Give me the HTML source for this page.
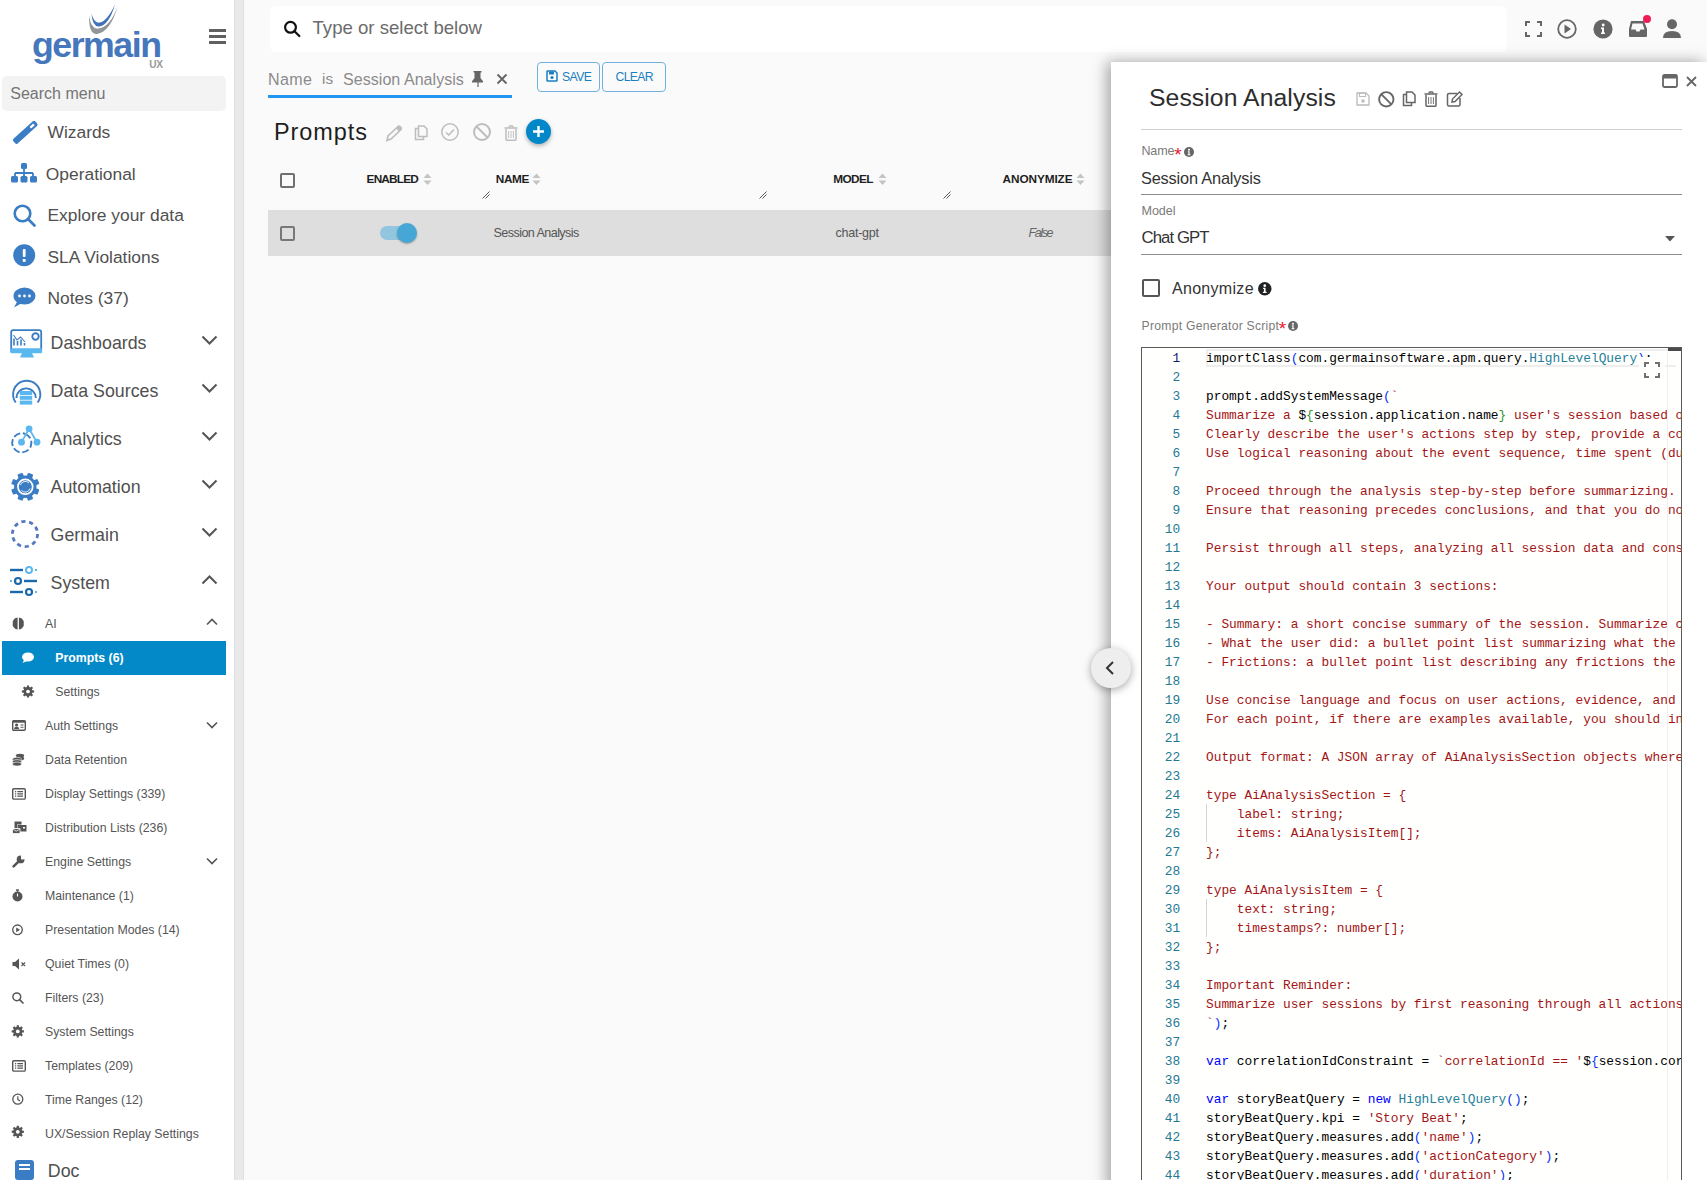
<!DOCTYPE html><html><head><meta charset="utf-8"><style>
html,body{margin:0;padding:0}
body{width:1707px;height:1180px;overflow:hidden;position:relative;background:#fafafa;font-family:"Liberation Sans",sans-serif}
svg{overflow:visible}
</style></head><body>
<div style="position:absolute;left:0px;top:0px;width:234px;height:1180px;background:#fff"></div>
<div style="position:absolute;left:234px;top:0px;width:10px;height:1180px;background:linear-gradient(90deg,#d9d9d9 0px,#e9e9e9 1.5px,#e9e9e9 8.5px,#d9d9d9 10px)"></div>
<svg style="position:absolute;left:0px;top:0px;" width="130" height="40" viewBox="0 0 130 40"><path d="M89.2 16 Q88.5 34.5 97 33.9 Q110 32.5 118 5.8 Q110 27.5 98 28.6 Q91 29.2 89.2 16 Z" fill="#939598"/><path d="M91.4 13.6 Q92.5 27 99 26.4 Q109 25.2 115 4.4 Q107 21.5 99 22.6 Q94 23.2 91.4 13.6 Z" fill="#4472b8"/></svg>
<div style="position:absolute;left:32.00px;top:27.98px;font-size:35.7px;line-height:35.7px;color:#4676bb;font-weight:bold;font-family:'Liberation Sans', sans-serif;white-space:pre;letter-spacing:-1.479px;">germain</div>
<div style="position:absolute;left:149.30px;top:60.37px;font-size:10.2px;line-height:10.2px;color:#9a9a9a;font-weight:bold;font-family:'Liberation Sans', sans-serif;white-space:pre;letter-spacing:-0.378px;">UX</div>
<div style="position:absolute;left:209px;top:29px;width:17px;height:2.5px;background:#606060"></div>
<div style="position:absolute;left:209px;top:35px;width:17px;height:2.5px;background:#606060"></div>
<div style="position:absolute;left:209px;top:41px;width:17px;height:2.5px;background:#606060"></div>
<div style="position:absolute;left:2px;top:76px;width:224px;height:35px;background:#f3f3f3;border-radius:5px"></div>
<div style="position:absolute;left:10.30px;top:86.46px;font-size:16px;line-height:16px;color:#757575;font-weight:normal;font-family:'Liberation Sans', sans-serif;white-space:pre;">Search menu</div>
<div style="position:absolute;left:47.50px;top:124.07px;font-size:17.4px;line-height:17.4px;color:#505050;font-weight:normal;font-family:'Liberation Sans', sans-serif;white-space:pre;">Wizards</div>
<div style="position:absolute;left:45.80px;top:166.07px;font-size:17.4px;line-height:17.4px;color:#505050;font-weight:normal;font-family:'Liberation Sans', sans-serif;white-space:pre;">Operational</div>
<div style="position:absolute;left:47.50px;top:207.07px;font-size:17.4px;line-height:17.4px;color:#505050;font-weight:normal;font-family:'Liberation Sans', sans-serif;white-space:pre;">Explore your data</div>
<div style="position:absolute;left:47.50px;top:249.07px;font-size:17.4px;line-height:17.4px;color:#505050;font-weight:normal;font-family:'Liberation Sans', sans-serif;white-space:pre;">SLA Violations</div>
<div style="position:absolute;left:47.50px;top:290.07px;font-size:17.4px;line-height:17.4px;color:#505050;font-weight:normal;font-family:'Liberation Sans', sans-serif;white-space:pre;">Notes (37)</div>
<svg style="position:absolute;left:0px;top:0px;" width="1" height="1" viewBox="0 0 1 1"><g transform="translate(0.6 1.3) rotate(-42 24.6 131)"><rect x="9.8" y="128" width="29.6" height="6.2" rx="1.8" fill="#3b7dc4"/><rect x="31.5" y="129.9" width="5" height="2.2" rx="0.5" fill="#fff"/></g></svg>
<svg style="position:absolute;left:11px;top:163px;" width="26" height="20" viewBox="0 0 26 20"><rect x="10" y="0" width="6" height="6" rx="1.5" fill="#3b7dc4"/><path d="M13 6 V10 M4 10 H22 M4 10 V13 M13 10 V13 M22 10 V13" stroke="#3b7dc4" stroke-width="1.8" fill="none"/><rect x="0" y="13" width="7" height="6.5" rx="1.5" fill="#3b7dc4"/><rect x="9.5" y="13" width="7" height="6.5" rx="1.5" fill="#3b7dc4"/><rect x="19" y="13" width="7" height="6.5" rx="1.5" fill="#3b7dc4"/></svg>
<svg style="position:absolute;left:13px;top:204px;" width="23" height="23" viewBox="0 0 23 23"><circle cx="9.5" cy="9.5" r="7.8" stroke="#3b7dc4" stroke-width="2.6" fill="none"/><path d="M15 15 L21.5 21.5" stroke="#3b7dc4" stroke-width="2.8" stroke-linecap="round"/></svg>
<svg style="position:absolute;left:13px;top:244px;" width="23" height="23" viewBox="0 0 23 23"><circle cx="11.2" cy="11.2" r="11" fill="#3b7dc4"/><rect x="9.8" y="5" width="2.8" height="8" rx="1" fill="#fff"/><rect x="9.8" y="15" width="2.8" height="2.8" fill="#fff"/></svg>
<svg style="position:absolute;left:13px;top:287px;" width="23" height="21" viewBox="0 0 23 21"><ellipse cx="11.5" cy="9" rx="11" ry="8.6" fill="#3b7dc4"/><path d="M1 20.5 L5 13 L9 16 Z" fill="#3b7dc4"/><circle cx="6.5" cy="9" r="1.4" fill="#fff"/><circle cx="11.5" cy="9" r="1.4" fill="#fff"/><circle cx="16.5" cy="9" r="1.4" fill="#fff"/></svg>
<div style="position:absolute;left:50.60px;top:334.73px;font-size:17.8px;line-height:17.8px;color:#505050;font-weight:normal;font-family:'Liberation Sans', sans-serif;white-space:pre;">Dashboards</div>
<svg style="position:absolute;left:201px;top:335px;" width="17" height="10" viewBox="0 0 17 10"><path d="M1.5 1.5 L8.5 8.5 L15.5 1.5" stroke="#555" stroke-width="2" fill="none"/></svg>
<div style="position:absolute;left:50.60px;top:382.73px;font-size:17.8px;line-height:17.8px;color:#505050;font-weight:normal;font-family:'Liberation Sans', sans-serif;white-space:pre;">Data Sources</div>
<svg style="position:absolute;left:201px;top:383px;" width="17" height="10" viewBox="0 0 17 10"><path d="M1.5 1.5 L8.5 8.5 L15.5 1.5" stroke="#555" stroke-width="2" fill="none"/></svg>
<div style="position:absolute;left:50.60px;top:430.73px;font-size:17.8px;line-height:17.8px;color:#505050;font-weight:normal;font-family:'Liberation Sans', sans-serif;white-space:pre;">Analytics</div>
<svg style="position:absolute;left:201px;top:431px;" width="17" height="10" viewBox="0 0 17 10"><path d="M1.5 1.5 L8.5 8.5 L15.5 1.5" stroke="#555" stroke-width="2" fill="none"/></svg>
<div style="position:absolute;left:50.60px;top:478.73px;font-size:17.8px;line-height:17.8px;color:#505050;font-weight:normal;font-family:'Liberation Sans', sans-serif;white-space:pre;">Automation</div>
<svg style="position:absolute;left:201px;top:479px;" width="17" height="10" viewBox="0 0 17 10"><path d="M1.5 1.5 L8.5 8.5 L15.5 1.5" stroke="#555" stroke-width="2" fill="none"/></svg>
<div style="position:absolute;left:50.60px;top:526.73px;font-size:17.8px;line-height:17.8px;color:#505050;font-weight:normal;font-family:'Liberation Sans', sans-serif;white-space:pre;">Germain</div>
<svg style="position:absolute;left:201px;top:527px;" width="17" height="10" viewBox="0 0 17 10"><path d="M1.5 1.5 L8.5 8.5 L15.5 1.5" stroke="#555" stroke-width="2" fill="none"/></svg>
<div style="position:absolute;left:50.60px;top:574.73px;font-size:17.8px;line-height:17.8px;color:#505050;font-weight:normal;font-family:'Liberation Sans', sans-serif;white-space:pre;">System</div>
<svg style="position:absolute;left:201px;top:575px;" width="17" height="10" viewBox="0 0 17 10"><path d="M1.5 8.5 L8.5 1.5 L15.5 8.5" stroke="#555" stroke-width="2" fill="none"/></svg>
<svg style="position:absolute;left:0px;top:0px;" width="1" height="1" viewBox="0 0 1 1"><rect x="11.2" y="330.2" width="30" height="22" rx="2" fill="none" stroke="#3b7dc4" stroke-width="1.8"/><rect x="10.3" y="348.3" width="31.8" height="5" rx="1.5" fill="#5bb8ef"/><path d="M22 353 L20 357.5 H34 L32 353 Z" fill="#5bb8ef"/><path d="M13.5 335 L17 340 L20.5 337 L25 342" stroke="#3b7dc4" stroke-width="1.1" fill="none"/><path d="M14 345.5 V338.5 M17.5 345.5 V341 M21 345.5 V339.5 M24.5 345.5 V343" stroke="#3b7dc4" stroke-width="1.6"/><circle cx="35.5" cy="336.5" r="3.2" fill="none" stroke="#3b7dc4" stroke-width="1.9"/></svg>
<svg style="position:absolute;left:0px;top:0px;" width="1" height="1" viewBox="0 0 1 1"><path d="M15.8 402.5 A13.6 13.6 0 1 1 37.6 402.5" stroke="#3b7dc4" stroke-width="1.9" fill="none"/><path d="M16.5 398 A9.3 9.3 0 1 1 35.8 398" stroke="#3b7dc4" stroke-width="1.9" fill="none"/><rect x="19.8" y="391" width="12.4" height="4" fill="#5bb8ef"/><rect x="19.8" y="395.8" width="12.4" height="4" fill="#5bb8ef"/><rect x="19.8" y="400.6" width="12.4" height="4" fill="#5bb8ef"/></svg>
<svg style="position:absolute;left:0px;top:0px;" width="1" height="1" viewBox="0 0 1 1"><circle cx="21.8" cy="442.8" r="9.6" stroke="#3b7dc4" stroke-width="1.9" fill="none" stroke-dasharray="7 2.6" transform="rotate(-70 21.8 442.8)"/><path d="M21.5 442.2 L29.1 428.8 L37 442.2" stroke="#5bb8ef" stroke-width="1.7" fill="none"/><circle cx="29.1" cy="428.8" r="3.4" fill="#5bb8ef"/><circle cx="21.5" cy="442.2" r="3.4" fill="#5bb8ef"/><circle cx="37" cy="442.2" r="3.4" fill="#5bb8ef"/></svg>
<svg style="position:absolute;left:0px;top:0px;" width="1" height="1" viewBox="0 0 1 1"><rect x="22.5" y="472.6" width="5.6" height="6" rx="1" fill="#3b7dc4" transform="rotate(22.5 25.3 486.8)"/><rect x="22.5" y="472.6" width="5.6" height="6" rx="1" fill="#3b7dc4" transform="rotate(67.5 25.3 486.8)"/><rect x="22.5" y="472.6" width="5.6" height="6" rx="1" fill="#3b7dc4" transform="rotate(112.5 25.3 486.8)"/><rect x="22.5" y="472.6" width="5.6" height="6" rx="1" fill="#3b7dc4" transform="rotate(157.5 25.3 486.8)"/><rect x="22.5" y="472.6" width="5.6" height="6" rx="1" fill="#3b7dc4" transform="rotate(202.5 25.3 486.8)"/><rect x="22.5" y="472.6" width="5.6" height="6" rx="1" fill="#3b7dc4" transform="rotate(247.5 25.3 486.8)"/><rect x="22.5" y="472.6" width="5.6" height="6" rx="1" fill="#3b7dc4" transform="rotate(292.5 25.3 486.8)"/><rect x="22.5" y="472.6" width="5.6" height="6" rx="1" fill="#3b7dc4" transform="rotate(337.5 25.3 486.8)"/><circle cx="25.3" cy="486.8" r="11.2" fill="#3b7dc4"/><circle cx="25.3" cy="486.8" r="7.4" fill="none" stroke="#fff" stroke-width="1.7"/><path d="M20.5 485 A5 5 0 0 1 29 483" stroke="#fff" stroke-width="0.9" fill="none"/><path d="M30 488.5 A5 5 0 0 1 21.5 490.5" stroke="#fff" stroke-width="0.9" fill="none"/></svg>
<svg style="position:absolute;left:10px;top:519px;" width="30" height="30" viewBox="0 0 30 30"><circle cx="15" cy="15" r="12.6" stroke="#5579c0" stroke-width="2.8" fill="none" stroke-dasharray="4.2 3.7"/></svg>
<svg style="position:absolute;left:9px;top:566px;" width="30" height="30" viewBox="0 0 30 30"><path d="M1 4 H14" stroke="#1b68ad" stroke-width="2.4"/><circle cx="20" cy="4" r="3" fill="none" stroke="#5bb8ef" stroke-width="2"/><path d="M26 4 H28" stroke="#5bb8ef" stroke-width="2"/><path d="M1 15 H3" stroke="#5bb8ef" stroke-width="2"/><circle cx="9" cy="15" r="3" fill="none" stroke="#1b68ad" stroke-width="2.2"/><path d="M15 15 H28" stroke="#1b68ad" stroke-width="2.4"/><path d="M1 26 H14" stroke="#1b68ad" stroke-width="2.4"/><circle cx="20" cy="26" r="3" fill="none" stroke="#1b68ad" stroke-width="2.2"/><path d="M26 26 H28" stroke="#5bb8ef" stroke-width="2"/></svg>
<div style="position:absolute;left:45.00px;top:617.59px;font-size:12.3px;line-height:12.3px;color:#555;font-weight:normal;font-family:'Liberation Sans', sans-serif;white-space:pre;">AI</div>
<svg style="position:absolute;left:206px;top:618px;" width="12" height="8" viewBox="0 0 12 8"><path d="M1 6.5 L6 1.5 L11 6.5" stroke="#555" stroke-width="1.6" fill="none"/></svg>
<svg style="position:absolute;left:12px;top:617px;" width="13" height="13" viewBox="0 0 13 13"><path d="M5.6 0.6 Q2.5 0.8 1.5 3 Q0.2 4.5 0.8 6.5 Q0.2 8.5 1.5 10 Q3 12.6 5.6 12.4 Z M6.9 0.6 Q10 0.8 11 3 Q12.3 4.5 11.7 6.5 Q12.3 8.5 11 10 Q9.5 12.6 6.9 12.4 Z" fill="#555"/></svg>
<div style="position:absolute;left:2px;top:641px;width:224px;height:34px;background:#0389c8"></div>
<div style="position:absolute;left:55.30px;top:651.59px;font-size:12.3px;line-height:12.3px;color:#fff;font-weight:bold;font-family:'Liberation Sans', sans-serif;white-space:pre;">Prompts (6)</div>
<svg style="position:absolute;left:21.3px;top:652px;" width="13" height="12" viewBox="0 0 13 12"><ellipse cx="7" cy="5" rx="6" ry="4.6" fill="#fff"/><path d="M1.5 11 L3.5 7 L6 9 Z" fill="#fff"/></svg>
<div style="position:absolute;left:55.30px;top:685.59px;font-size:12.3px;line-height:12.3px;color:#555;font-weight:normal;font-family:'Liberation Sans', sans-serif;white-space:pre;">Settings</div>
<div style="position:absolute;left:45.00px;top:719.59px;font-size:12.3px;line-height:12.3px;color:#555;font-weight:normal;font-family:'Liberation Sans', sans-serif;white-space:pre;">Auth Settings</div>
<svg style="position:absolute;left:206px;top:721px;" width="12" height="8" viewBox="0 0 12 8"><path d="M1 1.5 L6 6.5 L11 1.5" stroke="#555" stroke-width="1.6" fill="none"/></svg>
<div style="position:absolute;left:45.00px;top:753.59px;font-size:12.3px;line-height:12.3px;color:#555;font-weight:normal;font-family:'Liberation Sans', sans-serif;white-space:pre;">Data Retention</div>
<div style="position:absolute;left:45.00px;top:787.59px;font-size:12.3px;line-height:12.3px;color:#555;font-weight:normal;font-family:'Liberation Sans', sans-serif;white-space:pre;">Display Settings (339)</div>
<div style="position:absolute;left:45.00px;top:821.59px;font-size:12.3px;line-height:12.3px;color:#555;font-weight:normal;font-family:'Liberation Sans', sans-serif;white-space:pre;">Distribution Lists (236)</div>
<div style="position:absolute;left:45.00px;top:855.59px;font-size:12.3px;line-height:12.3px;color:#555;font-weight:normal;font-family:'Liberation Sans', sans-serif;white-space:pre;">Engine Settings</div>
<svg style="position:absolute;left:206px;top:857px;" width="12" height="8" viewBox="0 0 12 8"><path d="M1 1.5 L6 6.5 L11 1.5" stroke="#555" stroke-width="1.6" fill="none"/></svg>
<div style="position:absolute;left:45.00px;top:889.59px;font-size:12.3px;line-height:12.3px;color:#555;font-weight:normal;font-family:'Liberation Sans', sans-serif;white-space:pre;">Maintenance (1)</div>
<div style="position:absolute;left:45.00px;top:923.59px;font-size:12.3px;line-height:12.3px;color:#555;font-weight:normal;font-family:'Liberation Sans', sans-serif;white-space:pre;">Presentation Modes (14)</div>
<div style="position:absolute;left:45.00px;top:957.59px;font-size:12.3px;line-height:12.3px;color:#555;font-weight:normal;font-family:'Liberation Sans', sans-serif;white-space:pre;">Quiet Times (0)</div>
<div style="position:absolute;left:45.00px;top:991.59px;font-size:12.3px;line-height:12.3px;color:#555;font-weight:normal;font-family:'Liberation Sans', sans-serif;white-space:pre;">Filters (23)</div>
<div style="position:absolute;left:45.00px;top:1025.59px;font-size:12.3px;line-height:12.3px;color:#555;font-weight:normal;font-family:'Liberation Sans', sans-serif;white-space:pre;">System Settings</div>
<div style="position:absolute;left:45.00px;top:1059.59px;font-size:12.3px;line-height:12.3px;color:#555;font-weight:normal;font-family:'Liberation Sans', sans-serif;white-space:pre;">Templates (209)</div>
<div style="position:absolute;left:45.00px;top:1093.59px;font-size:12.3px;line-height:12.3px;color:#555;font-weight:normal;font-family:'Liberation Sans', sans-serif;white-space:pre;">Time Ranges (12)</div>
<div style="position:absolute;left:45.00px;top:1127.59px;font-size:12.3px;line-height:12.3px;color:#555;font-weight:normal;font-family:'Liberation Sans', sans-serif;white-space:pre;">UX/Session Replay Settings</div>
<div style="position:absolute;left:47.80px;top:1163.43px;font-size:17.8px;line-height:17.8px;color:#505050;font-weight:normal;font-family:'Liberation Sans', sans-serif;white-space:pre;">Doc</div>
<svg style="position:absolute;left:15px;top:1160px;" width="20" height="20" viewBox="0 0 20 20"><rect x="0" y="0" width="19" height="20" rx="3" fill="#3b7dc4"/><path d="M4 5 H15 M4 9 H15" stroke="#fff" stroke-width="1.8"/></svg>
<svg style="position:absolute;left:0px;top:0px;" width="1" height="1" viewBox="0 0 1 1"><path d="M32.30 690.31 L34.11 690.43 L34.11 692.57 L32.30 692.69 L31.88 693.70 L33.07 695.07 L31.57 696.57 L30.20 695.38 L29.19 695.80 L29.07 697.61 L26.93 697.61 L26.81 695.80 L25.80 695.38 L24.43 696.57 L22.93 695.07 L24.12 693.70 L23.70 692.69 L21.89 692.57 L21.89 690.43 L23.70 690.31 L24.12 689.30 L22.93 687.93 L24.43 686.43 L25.80 687.62 L26.81 687.20 L26.93 685.39 L29.07 685.39 L29.19 687.20 L30.20 687.62 L31.57 686.43 L33.07 687.93 L31.88 689.30 Z" fill="#555"/><circle cx="28" cy="691.5" r="4.37" fill="#555"/><circle cx="28" cy="691.5" r="1.86" fill="#fff"/></svg>
<svg style="position:absolute;left:0px;top:0px;" width="1" height="1" viewBox="0 0 1 1"><path d="M22.10 1030.21 L23.91 1030.33 L23.91 1032.47 L22.10 1032.59 L21.68 1033.60 L22.87 1034.97 L21.37 1036.47 L20.00 1035.28 L18.99 1035.70 L18.87 1037.51 L16.73 1037.51 L16.61 1035.70 L15.60 1035.28 L14.23 1036.47 L12.73 1034.97 L13.92 1033.60 L13.50 1032.59 L11.69 1032.47 L11.69 1030.33 L13.50 1030.21 L13.92 1029.20 L12.73 1027.83 L14.23 1026.33 L15.60 1027.52 L16.61 1027.10 L16.73 1025.29 L18.87 1025.29 L18.99 1027.10 L20.00 1027.52 L21.37 1026.33 L22.87 1027.83 L21.68 1029.20 Z" fill="#555"/><circle cx="17.8" cy="1031.4" r="4.37" fill="#555"/><circle cx="17.8" cy="1031.4" r="1.86" fill="#fff"/></svg>
<svg style="position:absolute;left:0px;top:0px;" width="1" height="1" viewBox="0 0 1 1"><path d="M22.10 1130.61 L23.91 1130.73 L23.91 1132.87 L22.10 1132.99 L21.68 1134.00 L22.87 1135.37 L21.37 1136.87 L20.00 1135.68 L18.99 1136.10 L18.87 1137.91 L16.73 1137.91 L16.61 1136.10 L15.60 1135.68 L14.23 1136.87 L12.73 1135.37 L13.92 1134.00 L13.50 1132.99 L11.69 1132.87 L11.69 1130.73 L13.50 1130.61 L13.92 1129.60 L12.73 1128.23 L14.23 1126.73 L15.60 1127.92 L16.61 1127.50 L16.73 1125.69 L18.87 1125.69 L18.99 1127.50 L20.00 1127.92 L21.37 1126.73 L22.87 1128.23 L21.68 1129.60 Z" fill="#555"/><circle cx="17.8" cy="1131.8" r="4.37" fill="#555"/><circle cx="17.8" cy="1131.8" r="1.86" fill="#fff"/></svg>
<svg style="position:absolute;left:12px;top:720px;" width="14" height="11" viewBox="0 0 14 11"><rect x="0.7" y="0.7" width="12.6" height="9.6" rx="1" stroke="#555" stroke-width="1.4" fill="none"/><rect x="0.7" y="0.7" width="12.6" height="2" fill="#555"/><circle cx="4.6" cy="5" r="1.6" fill="#555"/><path d="M2 9 Q2 6.8 4.6 6.8 Q7.2 6.8 7.2 9 Z" fill="#555"/><path d="M8.5 5 H11.5 M8.5 7.3 H11.5" stroke="#555" stroke-width="1.1"/></svg>
<svg style="position:absolute;left:12px;top:753px;" width="13" height="13" viewBox="0 0 13 13"><ellipse cx="8" cy="2.6" rx="4.2" ry="1.9" fill="#555"/><ellipse cx="8" cy="5.4" rx="4.2" ry="1.9" fill="#555"/><ellipse cx="5" cy="6.2" rx="4.5" ry="2" fill="#555" stroke="#fff" stroke-width="0.6"/><ellipse cx="5" cy="8.6" rx="4.5" ry="2" fill="#555" stroke="#fff" stroke-width="0.6"/><ellipse cx="5" cy="11" rx="4.5" ry="2" fill="#555" stroke="#fff" stroke-width="0.6"/></svg>
<svg style="position:absolute;left:12px;top:787.5px;" width="14" height="12" viewBox="0 0 14 12"><rect x="0.7" y="0.7" width="12.6" height="10.4" rx="1.2" stroke="#555" stroke-width="1.4" fill="none"/><path d="M3 3.6 H4.2 M3 5.9 H4.2 M3 8.2 H4.2 M5.4 3.6 H11 M5.4 5.9 H11 M5.4 8.2 H11" stroke="#555" stroke-width="1.2"/></svg>
<svg style="position:absolute;left:12px;top:1059.5px;" width="14" height="12" viewBox="0 0 14 12"><rect x="0.7" y="0.7" width="12.6" height="10.4" rx="1.2" stroke="#555" stroke-width="1.4" fill="none"/><path d="M3 3.6 H4.2 M3 5.9 H4.2 M3 8.2 H4.2 M5.4 3.6 H11 M5.4 5.9 H11 M5.4 8.2 H11" stroke="#555" stroke-width="1.2"/></svg>
<svg style="position:absolute;left:12px;top:821px;" width="15" height="13" viewBox="0 0 15 13"><path d="M2.5 0.5 H9.5 V3.5 H5 V7 H2.5 Z" fill="#555"/><rect x="5.5" y="4" width="9" height="6.5" fill="#555"/><rect x="11" y="6" width="2" height="1.5" fill="#fff"/><path d="M0.5 7.5 H8 V12.5 H0.5 Z" fill="#555" stroke="#fff" stroke-width="0.8"/><path d="M0.8 8 L4.2 10.2 L7.8 8" stroke="#fff" stroke-width="0.8" fill="none"/></svg>
<svg style="position:absolute;left:12px;top:855px;" width="13" height="13" viewBox="0 0 13 13"><path d="M1.6 11.4 L6.2 6.8" stroke="#555" stroke-width="2.6" stroke-linecap="round"/><circle cx="8.6" cy="4.4" r="3.9" fill="#555"/><path d="M8.8 -0.5 L13.5 -0.5 L13.5 4.2 L9.2 4.6 Z" fill="#fff"/></svg>
<svg style="position:absolute;left:12px;top:889px;" width="11" height="13" viewBox="0 0 11 13"><circle cx="5.5" cy="7.5" r="5" fill="#555"/><rect x="4" y="0.3" width="3" height="1.5" fill="#555"/><rect x="5" y="1.5" width="1" height="1.5" fill="#555"/><path d="M5.5 7.5 V4.5" stroke="#fff" stroke-width="1.1"/></svg>
<svg style="position:absolute;left:12px;top:924px;" width="11" height="12" viewBox="0 0 11 12"><circle cx="5.5" cy="5.8" r="4.8" stroke="#555" stroke-width="1.3" fill="none"/><path d="M4.2 3.4 L8 5.8 L4.2 8.2 Z" fill="#555"/></svg>
<svg style="position:absolute;left:12px;top:957.5px;" width="15" height="12" viewBox="0 0 15 12"><path d="M0.5 4 H3 L7 0.5 V11.5 L3 8 H0.5 Z" fill="#555"/><path d="M9.5 4.5 L13 8 M13 4.5 L9.5 8" stroke="#555" stroke-width="1.1"/></svg>
<svg style="position:absolute;left:12px;top:992px;" width="12" height="12" viewBox="0 0 12 12"><circle cx="4.8" cy="4.8" r="3.9" stroke="#555" stroke-width="1.5" fill="none"/><path d="M7.6 7.6 L11 11" stroke="#555" stroke-width="1.7" stroke-linecap="round"/></svg>
<svg style="position:absolute;left:12px;top:1092.5px;" width="12" height="13" viewBox="0 0 12 13"><circle cx="5.8" cy="6.2" r="5" stroke="#555" stroke-width="1.3" fill="none"/><path d="M5.8 3.2 V6.4 L8 8" stroke="#555" stroke-width="1.2" fill="none"/></svg>
<div style="position:absolute;left:270px;top:6px;width:1237px;height:46px;background:#fff;border-radius:6px"></div>
<svg style="position:absolute;left:283px;top:20px;" width="18" height="18" viewBox="0 0 18 18"><circle cx="7.5" cy="7.3" r="5.4" stroke="#111" stroke-width="2.2" fill="none"/><path d="M11.5 11.3 L16.3 16" stroke="#111" stroke-width="2.3" stroke-linecap="round"/></svg>
<div style="position:absolute;left:312.50px;top:19.46px;font-size:18.6px;line-height:18.6px;color:#6b6b6b;font-weight:normal;font-family:'Liberation Sans', sans-serif;white-space:pre;">Type or select below</div>
<svg style="position:absolute;left:1525px;top:21px;" width="17" height="16" viewBox="0 0 17 16"><path d="M1 5 V1 H5 M12 1 H16 V5 M16 11 V15 H12 M5 15 H1 V11" stroke="#666" stroke-width="2" fill="none"/></svg>
<svg style="position:absolute;left:1557px;top:19px;" width="20" height="20" viewBox="0 0 20 20"><circle cx="10" cy="10" r="8.8" stroke="#666" stroke-width="1.8" fill="none"/><path d="M7.5 5.5 L14 10 L7.5 14.5 Z" fill="#666"/></svg>
<svg style="position:absolute;left:1593px;top:19px;" width="20" height="20" viewBox="0 0 20 20"><circle cx="10" cy="10" r="9.6" fill="#666"/><circle cx="10.2" cy="6" r="1.4" fill="#fff"/><path d="M8 8.5 H11 V13.5 H12 V15 H8 V13.5 H9 V10 H8 Z" fill="#fff"/></svg>
<svg style="position:absolute;left:1628px;top:20px;" width="20" height="18" viewBox="0 0 20 18"><path d="M3 1 H16 L19 9 V16 Q19 17 18 17 H2 Q1 17 1 16 V9 Z" fill="#666"/><path d="M4.5 3.5 H14.5 L16.5 9.5 H12.5 L11.5 11.5 H8.5 L7.5 9.5 H3 Z" fill="#fafafa"/></svg>
<svg style="position:absolute;left:1643px;top:15px;" width="8" height="8" viewBox="0 0 8 8"><circle cx="4" cy="4" r="4" fill="#ee1e55"/></svg>
<svg style="position:absolute;left:1663px;top:19px;" width="18" height="20" viewBox="0 0 18 20"><circle cx="9" cy="5.3" r="5" fill="#666"/><path d="M0 19 Q0 12 9 12 Q18 12 18 19 Z" fill="#666"/></svg>
<div style="position:absolute;left:268.00px;top:71.40px;font-size:16.061452513966483px;line-height:16.061452513966483px;color:#8a8a8a;font-weight:normal;font-family:'Liberation Sans', sans-serif;white-space:pre;letter-spacing:0.372px;">Name</div>
<div style="position:absolute;left:322.00px;top:71.00px;font-size:15.363128491620113px;line-height:15.363128491620113px;color:#8a8a8a;font-weight:normal;font-family:'Liberation Sans', sans-serif;white-space:pre;">is</div>
<div style="position:absolute;left:343.00px;top:71.40px;font-size:16.061452513966483px;line-height:16.061452513966483px;color:#8a8a8a;font-weight:normal;font-family:'Liberation Sans', sans-serif;white-space:pre;letter-spacing:0.031px;">Session Analysis</div>
<svg style="position:absolute;left:471px;top:71px;" width="14" height="17" viewBox="0 0 14 17"><path d="M2.5 0 H10.5 V1.3 L9.5 1.8 V7 L12 10.2 V11.5 H7.6 V16 H6.4 V11.5 H1 V10.2 L3.5 7 V1.8 L2.5 1.3 Z" fill="#666"/></svg>
<svg style="position:absolute;left:496px;top:73px;" width="12" height="12" viewBox="0 0 12 12"><path d="M1.5 1.5 L10.5 10.5 M10.5 1.5 L1.5 10.5" stroke="#666" stroke-width="1.9"/></svg>
<div style="position:absolute;left:268px;top:95px;width:244px;height:3px;background:#2196f3"></div>
<div style="position:absolute;left:537px;top:62px;width:63px;height:30px;border:1px solid #6fb3dd;border-radius:4px;box-sizing:border-box"></div>
<div style="position:absolute;left:602px;top:62px;width:64px;height:30px;border:1px solid #6fb3dd;border-radius:4px;box-sizing:border-box"></div>
<svg style="position:absolute;left:546px;top:70px;" width="12" height="12" viewBox="0 0 12 12"><path d="M1 1.5 Q1 1 1.5 1 H9 L11 3 V10.5 Q11 11 10.5 11 H1.5 Q1 11 1 10.5 Z" stroke="#1a7fc0" stroke-width="1.5" fill="none"/><rect x="3" y="1.5" width="5" height="3" fill="#1a7fc0"/><circle cx="6" cy="7.5" r="1.6" fill="#1a7fc0"/></svg>
<div style="position:absolute;left:562.00px;top:71.27px;font-size:12.2px;line-height:12.2px;color:#1a7fc0;font-weight:normal;font-family:'Liberation Sans', sans-serif;white-space:pre;letter-spacing:-0.553px;">SAVE</div>
<div style="position:absolute;left:615.50px;top:71.27px;font-size:12.2px;line-height:12.2px;color:#1a7fc0;font-weight:normal;font-family:'Liberation Sans', sans-serif;white-space:pre;letter-spacing:-0.672px;">CLEAR</div>
<div style="position:absolute;left:274.00px;top:120.84px;font-size:23.46368715083799px;line-height:23.46368715083799px;color:#1e1e1e;font-weight:normal;font-family:'Liberation Sans', sans-serif;white-space:pre;letter-spacing:0.933px;">Prompts</div>
<svg style="position:absolute;left:385px;top:125px;" width="18" height="17" viewBox="0 0 18 17"><path d="M2 15.5 L3 11 L13 1.5 Q14 0.8 15 1.5 L16 2.5 Q16.7 3.5 16 4.5 L6 14 Z" fill="none" stroke="#bdbdbd" stroke-width="1.6"/><path d="M11.5 3 L14.5 6" stroke="#bdbdbd" stroke-width="1.5"/><path d="M12.5 1.5 L16 5" stroke="#bdbdbd" stroke-width="3"/></svg>
<svg style="position:absolute;left:414px;top:125px;" width="14" height="16" viewBox="0 0 14 16"><path d="M4 3.5 H1.5 V14.5 H9.5 V12" stroke="#bdbdbd" stroke-width="1.5" fill="none"/><path d="M4.5 1 H10 L13 4 V11.5 H4.5 Z" stroke="#bdbdbd" stroke-width="1.5" fill="none"/></svg>
<svg style="position:absolute;left:441px;top:123px;" width="18" height="18" viewBox="0 0 18 18"><circle cx="9" cy="9" r="8.2" stroke="#bdbdbd" stroke-width="1.5" fill="none"/><path d="M5 9.5 L7.8 12 L13 6.5" stroke="#bdbdbd" stroke-width="1.6" fill="none"/></svg>
<svg style="position:absolute;left:473px;top:123px;" width="18" height="18" viewBox="0 0 18 18"><circle cx="9" cy="9" r="8" stroke="#bdbdbd" stroke-width="2" fill="none"/><path d="M3.5 3.5 L14.5 14.5" stroke="#bdbdbd" stroke-width="2"/></svg>
<svg style="position:absolute;left:504px;top:125px;" width="14" height="16" viewBox="0 0 14 16"><path d="M0.5 3 H13.5" stroke="#bdbdbd" stroke-width="1.5"/><path d="M5 2.5 Q5 1 6 1 H8 Q9 1 9 2.5" stroke="#bdbdbd" stroke-width="1.5" fill="none"/><path d="M2 4 V14.5 Q2 15.2 2.7 15.2 H11.3 Q12 15.2 12 14.5 V4" stroke="#bdbdbd" stroke-width="1.5" fill="none"/><path d="M4.6 6 V13 M7 6 V13 M9.4 6 V13" stroke="#bdbdbd" stroke-width="0.9"/></svg>
<div style="position:absolute;left:526px;top:119px;width:25px;height:25px;border-radius:50%;background:#0288c9;box-shadow:0 2px 4px rgba(0,0,0,0.3)"></div>
<svg style="position:absolute;left:532px;top:125px;" width="13" height="13" viewBox="0 0 13 13"><path d="M6.5 1 V12 M1 6.5 H12" stroke="#fff" stroke-width="2.4"/></svg>
<div style="position:absolute;left:280px;top:173px;width:15px;height:15px;border:2px solid #707070;border-radius:2px;box-sizing:border-box"></div>
<div style="position:absolute;left:366.60px;top:174.11px;font-size:11.8px;line-height:11.8px;color:#1e1e1e;font-weight:bold;font-family:'Liberation Sans', sans-serif;white-space:pre;letter-spacing:-0.809px;">ENABLED</div>
<svg style="position:absolute;left:422.5px;top:173px;" width="9" height="13" viewBox="0 0 9 13"><path d="M0.5 5 L4.5 0.5 L8.5 5 Z" fill="#c4c4c4"/><path d="M0.5 7.5 L4.5 12 L8.5 7.5 Z" fill="#c4c4c4"/></svg>
<div style="position:absolute;left:495.70px;top:174.11px;font-size:11.8px;line-height:11.8px;color:#1e1e1e;font-weight:bold;font-family:'Liberation Sans', sans-serif;white-space:pre;letter-spacing:-0.317px;">NAME</div>
<svg style="position:absolute;left:532px;top:173px;" width="9" height="13" viewBox="0 0 9 13"><path d="M0.5 5 L4.5 0.5 L8.5 5 Z" fill="#c4c4c4"/><path d="M0.5 7.5 L4.5 12 L8.5 7.5 Z" fill="#c4c4c4"/></svg>
<div style="position:absolute;left:833.30px;top:174.11px;font-size:11.8px;line-height:11.8px;color:#1e1e1e;font-weight:bold;font-family:'Liberation Sans', sans-serif;white-space:pre;letter-spacing:-0.599px;">MODEL</div>
<svg style="position:absolute;left:877.5px;top:173px;" width="9" height="13" viewBox="0 0 9 13"><path d="M0.5 5 L4.5 0.5 L8.5 5 Z" fill="#c4c4c4"/><path d="M0.5 7.5 L4.5 12 L8.5 7.5 Z" fill="#c4c4c4"/></svg>
<div style="position:absolute;left:1002.60px;top:174.11px;font-size:11.8px;line-height:11.8px;color:#1e1e1e;font-weight:bold;font-family:'Liberation Sans', sans-serif;white-space:pre;letter-spacing:-0.100px;">ANONYMIZE</div>
<svg style="position:absolute;left:1076px;top:173px;" width="9" height="13" viewBox="0 0 9 13"><path d="M0.5 5 L4.5 0.5 L8.5 5 Z" fill="#c4c4c4"/><path d="M0.5 7.5 L4.5 12 L8.5 7.5 Z" fill="#c4c4c4"/></svg>
<svg style="position:absolute;left:482px;top:191px;" width="8" height="8" viewBox="0 0 8 8"><path d="M0.5 7.5 L7.5 0.5 M3.5 7.5 L7.5 3.5" stroke="#444" stroke-width="0.9"/></svg>
<svg style="position:absolute;left:758.5px;top:191px;" width="8" height="8" viewBox="0 0 8 8"><path d="M0.5 7.5 L7.5 0.5 M3.5 7.5 L7.5 3.5" stroke="#444" stroke-width="0.9"/></svg>
<svg style="position:absolute;left:943px;top:191px;" width="8" height="8" viewBox="0 0 8 8"><path d="M0.5 7.5 L7.5 0.5 M3.5 7.5 L7.5 3.5" stroke="#444" stroke-width="0.9"/></svg>
<div style="position:absolute;left:268px;top:210px;width:843px;height:46px;background:#dedede"></div>
<div style="position:absolute;left:280px;top:226px;width:15px;height:15px;border:2px solid #777;border-radius:2px;box-sizing:border-box"></div>
<div style="position:absolute;left:380px;top:226px;width:36px;height:14px;background:#92c5de;border-radius:7px"></div>
<div style="position:absolute;left:397px;top:223px;width:20px;height:20px;border-radius:50%;background:#46a7d6;box-shadow:0 1px 2px rgba(0,0,0,0.3)"></div>
<div style="position:absolute;left:493.50px;top:226.66px;font-size:12.569832402234637px;line-height:12.569832402234637px;color:#555;font-weight:normal;font-family:'Liberation Sans', sans-serif;white-space:pre;letter-spacing:-0.556px;">Session Analysis</div>
<div style="position:absolute;left:835.60px;top:226.66px;font-size:12.569832402234637px;line-height:12.569832402234637px;color:#555;font-weight:normal;font-family:'Liberation Sans', sans-serif;white-space:pre;letter-spacing:-0.291px;">chat-gpt</div>
<div style="position:absolute;left:1028.60px;top:226.66px;font-size:12.569832402234637px;line-height:12.569832402234637px;color:#666;font-weight:normal;font-family:'Liberation Sans', sans-serif;white-space:pre;letter-spacing:-1.433px;font-style:italic">False</div>
<div style="position:absolute;left:1111px;top:62px;width:596px;height:1130px;background:#fff;box-shadow:-4px 0 14px rgba(0,0,0,0.35)"></div>
<svg style="position:absolute;left:1662px;top:74px;" width="16" height="14" viewBox="0 0 16 14"><rect x="1" y="1" width="14" height="12" rx="1.5" stroke="#666" stroke-width="1.8" fill="none"/><rect x="1" y="1" width="14" height="3.5" fill="#666"/></svg>
<svg style="position:absolute;left:1686px;top:76px;" width="11" height="11" viewBox="0 0 11 11"><path d="M1 1 L10 10 M10 1 L1 10" stroke="#666" stroke-width="1.8"/></svg>
<div style="position:absolute;left:1149.00px;top:85.77px;font-size:24.720670391061454px;line-height:24.720670391061454px;color:#2d2d2d;font-weight:normal;font-family:'Liberation Sans', sans-serif;white-space:pre;letter-spacing:0.085px;">Session Analysis</div>
<svg style="position:absolute;left:1356px;top:92px;" width="14" height="14" viewBox="0 0 14 14"><path d="M1 1 H10 L13 4 V13 H1 Z" stroke="#bbb" stroke-width="1.3" fill="none"/><rect x="3.5" y="1" width="6" height="3.5" stroke="#bbb" stroke-width="1" fill="none"/><circle cx="7" cy="9" r="1.7" fill="#bbb"/></svg>
<svg style="position:absolute;left:1378px;top:91px;" width="17" height="17" viewBox="0 0 17 17"><circle cx="8.3" cy="8.3" r="7.2" stroke="#666" stroke-width="1.9" fill="none"/><path d="M3.2 3.2 L13.4 13.4" stroke="#666" stroke-width="1.9"/></svg>
<svg style="position:absolute;left:1402px;top:91px;" width="15" height="16" viewBox="0 0 15 16"><path d="M4 3.5 H1.5 V14.5 H9.5 V12" stroke="#666" stroke-width="1.5" fill="none"/><path d="M4.5 1 H10 L13 4 V11.5 H4.5 Z" stroke="#666" stroke-width="1.5" fill="none"/></svg>
<svg style="position:absolute;left:1424px;top:91px;" width="14" height="16" viewBox="0 0 14 16"><path d="M0.5 3 H13.5" stroke="#666" stroke-width="1.5"/><path d="M5 2.5 Q5 1 6 1 H8 Q9 1 9 2.5" stroke="#666" stroke-width="1.5" fill="none"/><path d="M2 4 V14.5 Q2 15.2 2.7 15.2 H11.3 Q12 15.2 12 14.5 V4" stroke="#666" stroke-width="1.5" fill="none"/><path d="M4.6 6 V13 M7 6 V13 M9.4 6 V13" stroke="#666" stroke-width="0.9"/></svg>
<svg style="position:absolute;left:1446px;top:91px;" width="17" height="16" viewBox="0 0 17 16"><path d="M11 2.5 H3 Q1.5 2.5 1.5 4 V13.5 Q1.5 15 3 15 H12.5 Q14 15 14 13.5 V7" stroke="#666" stroke-width="1.5" fill="none"/><path d="M6 11 L6.5 8 L13.5 1 L16 3.5 L9 10.5 Z" stroke="#666" stroke-width="1.5" fill="none"/></svg>
<div style="position:absolute;left:1141px;top:129px;width:541px;height:1px;background:#cfcfcf"></div>
<div style="position:absolute;left:1141.50px;top:145.46px;font-size:12.569832402234637px;line-height:12.569832402234637px;color:#7a7a7a;font-weight:normal;font-family:'Liberation Sans', sans-serif;white-space:pre;letter-spacing:-0.187px;">Name</div>
<div style="position:absolute;left:1174.30px;top:144.82px;font-size:19px;line-height:19px;color:#e8192c;font-weight:normal;font-family:'Liberation Sans', sans-serif;white-space:pre;">*</div>
<svg style="position:absolute;left:1184px;top:147px;" width="10" height="10" viewBox="0 0 10 10"><circle cx="5.0" cy="5.0" r="5.0" fill="#666"/><circle cx="5.0" cy="2.7" r="1.0" fill="#fff"/><path d="M3.8 4.2 H5.6000000000000005 V7.199999999999999 H6.4 V8.2 H3.5999999999999996 V7.199999999999999 H4.4 V5.2 H3.8 Z" fill="#fff"/></svg>
<div style="position:absolute;left:1141.00px;top:169.77px;font-size:16.34078212290503px;line-height:16.34078212290503px;color:#333;font-weight:normal;font-family:'Liberation Sans', sans-serif;white-space:pre;letter-spacing:-0.176px;">Session Analysis</div>
<div style="position:absolute;left:1141px;top:194px;width:541px;height:1.2px;background:#8c8c8c"></div>
<div style="position:absolute;left:1141.50px;top:205.16px;font-size:12.569832402234637px;line-height:12.569832402234637px;color:#7a7a7a;font-weight:normal;font-family:'Liberation Sans', sans-serif;white-space:pre;letter-spacing:-0.063px;">Model</div>
<div style="position:absolute;left:1141.50px;top:229.81px;font-size:16.75977653631285px;line-height:16.75977653631285px;color:#333;font-weight:normal;font-family:'Liberation Sans', sans-serif;white-space:pre;letter-spacing:-0.928px;">Chat GPT</div>
<svg style="position:absolute;left:1665px;top:236px;" width="10" height="6" viewBox="0 0 10 6"><path d="M0 0 H10 L5 5.5 Z" fill="#555"/></svg>
<div style="position:absolute;left:1141px;top:254px;width:541px;height:1.2px;background:#8c8c8c"></div>
<div style="position:absolute;left:1142px;top:279px;width:18px;height:18px;border:2px solid #555;border-radius:2px;box-sizing:border-box"></div>
<div style="position:absolute;left:1172.00px;top:280.10px;font-size:16.061452513966483px;line-height:16.061452513966483px;color:#333;font-weight:normal;font-family:'Liberation Sans', sans-serif;white-space:pre;letter-spacing:0.272px;">Anonymize</div>
<svg style="position:absolute;left:1258px;top:281.5px;" width="13.5" height="13.5" viewBox="0 0 13.5 13.5"><circle cx="6.75" cy="6.75" r="6.75" fill="#222"/><circle cx="6.75" cy="3.6450000000000005" r="1.35" fill="#fff"/><path d="M5.13 5.67 H7.5600000000000005 V9.719999999999999 H8.64 V11.069999999999999 H4.859999999999999 V9.719999999999999 H5.94 V7.0200000000000005 H5.13 Z" fill="#fff"/></svg>
<div style="position:absolute;left:1141.60px;top:319.51px;font-size:12.150837988826815px;line-height:12.150837988826815px;color:#7a7a7a;font-weight:normal;font-family:'Liberation Sans', sans-serif;white-space:pre;letter-spacing:0.263px;">Prompt Generator Script</div>
<div style="position:absolute;left:1278.80px;top:318.92px;font-size:19px;line-height:19px;color:#e8192c;font-weight:normal;font-family:'Liberation Sans', sans-serif;white-space:pre;">*</div>
<svg style="position:absolute;left:1288px;top:320.5px;" width="10" height="10" viewBox="0 0 10 10"><circle cx="5.0" cy="5.0" r="5.0" fill="#666"/><circle cx="5.0" cy="2.7" r="1.0" fill="#fff"/><path d="M3.8 4.2 H5.6000000000000005 V7.199999999999999 H6.4 V8.2 H3.5999999999999996 V7.199999999999999 H4.4 V5.2 H3.8 Z" fill="#fff"/></svg>
<div style="position:absolute;left:1141px;top:347px;width:541px;height:840px;box-sizing:border-box;border:1px solid #5a5a5a;background:#fffffe;overflow:hidden">
<div style="position:absolute;left:64px;top:0.70px;width:470px;height:18px;box-sizing:border-box;border:2px solid #eeeeee;border-right:none"></div><div style="position:absolute;left:64px;top:455.98px;width:1px;height:38px;background:#d3d3d3"></div><div style="position:absolute;left:64px;top:550.98px;width:1px;height:38px;background:#d3d3d3"></div><div style="position:absolute;left:0;width:38.20px;text-align:right;top:0.78px;height:19px;line-height:19px;font:12.845px/19px 'Liberation Mono',monospace;color:#0b216f">1</div><div style="position:absolute;left:64px;top:0.78px;height:19px;white-space:pre;font:12.845px/19px 'Liberation Mono',monospace"><span style="color:#000000">importClass</span><span style="color:#0431fa">(</span><span style="color:#000000">com.germainsoftware.apm.query.</span><span style="color:#267f99">HighLevelQuery</span><span style="color:#0431fa">)</span><span style="color:#000000">;</span></div><div style="position:absolute;left:0;width:38.20px;text-align:right;top:19.78px;height:19px;line-height:19px;font:12.845px/19px 'Liberation Mono',monospace;color:#237893">2</div><div style="position:absolute;left:0;width:38.20px;text-align:right;top:38.78px;height:19px;line-height:19px;font:12.845px/19px 'Liberation Mono',monospace;color:#237893">3</div><div style="position:absolute;left:64px;top:38.78px;height:19px;white-space:pre;font:12.845px/19px 'Liberation Mono',monospace"><span style="color:#000000">prompt.addSystemMessage</span><span style="color:#0431fa">(</span><span style="color:#a31515">`</span></div><div style="position:absolute;left:0;width:38.20px;text-align:right;top:57.78px;height:19px;line-height:19px;font:12.845px/19px 'Liberation Mono',monospace;color:#237893">4</div><div style="position:absolute;left:64px;top:57.78px;height:19px;white-space:pre;font:12.845px/19px 'Liberation Mono',monospace"><span style="color:#a31515">Summarize a </span><span style="color:#000000">$</span><span style="color:#319331">{</span><span style="color:#000000">session.application.name</span><span style="color:#319331">}</span><span style="color:#a31515"> user&#x27;s session based on the events</span></div><div style="position:absolute;left:0;width:38.20px;text-align:right;top:76.78px;height:19px;line-height:19px;font:12.845px/19px 'Liberation Mono',monospace;color:#237893">5</div><div style="position:absolute;left:64px;top:76.78px;height:19px;white-space:pre;font:12.845px/19px 'Liberation Mono',monospace"><span style="color:#a31515">Clearly describe the user&#x27;s actions step by step, provide a concise</span></div><div style="position:absolute;left:0;width:38.20px;text-align:right;top:95.78px;height:19px;line-height:19px;font:12.845px/19px 'Liberation Mono',monospace;color:#237893">6</div><div style="position:absolute;left:64px;top:95.78px;height:19px;white-space:pre;font:12.845px/19px 'Liberation Mono',monospace"><span style="color:#a31515">Use logical reasoning about the event sequence, time spent (duration</span></div><div style="position:absolute;left:0;width:38.20px;text-align:right;top:114.78px;height:19px;line-height:19px;font:12.845px/19px 'Liberation Mono',monospace;color:#237893">7</div><div style="position:absolute;left:0;width:38.20px;text-align:right;top:133.78px;height:19px;line-height:19px;font:12.845px/19px 'Liberation Mono',monospace;color:#237893">8</div><div style="position:absolute;left:64px;top:133.78px;height:19px;white-space:pre;font:12.845px/19px 'Liberation Mono',monospace"><span style="color:#a31515">Proceed through the analysis step-by-step before summarizing. Do</span></div><div style="position:absolute;left:0;width:38.20px;text-align:right;top:152.78px;height:19px;line-height:19px;font:12.845px/19px 'Liberation Mono',monospace;color:#237893">9</div><div style="position:absolute;left:64px;top:152.78px;height:19px;white-space:pre;font:12.845px/19px 'Liberation Mono',monospace"><span style="color:#a31515">Ensure that reasoning precedes conclusions, and that you do not</span></div><div style="position:absolute;left:0;width:38.20px;text-align:right;top:171.78px;height:19px;line-height:19px;font:12.845px/19px 'Liberation Mono',monospace;color:#237893">10</div><div style="position:absolute;left:0;width:38.20px;text-align:right;top:190.78px;height:19px;line-height:19px;font:12.845px/19px 'Liberation Mono',monospace;color:#237893">11</div><div style="position:absolute;left:64px;top:190.78px;height:19px;white-space:pre;font:12.845px/19px 'Liberation Mono',monospace"><span style="color:#a31515">Persist through all steps, analyzing all session data and consider</span></div><div style="position:absolute;left:0;width:38.20px;text-align:right;top:209.78px;height:19px;line-height:19px;font:12.845px/19px 'Liberation Mono',monospace;color:#237893">12</div><div style="position:absolute;left:0;width:38.20px;text-align:right;top:228.78px;height:19px;line-height:19px;font:12.845px/19px 'Liberation Mono',monospace;color:#237893">13</div><div style="position:absolute;left:64px;top:228.78px;height:19px;white-space:pre;font:12.845px/19px 'Liberation Mono',monospace"><span style="color:#a31515">Your output should contain 3 sections:</span></div><div style="position:absolute;left:0;width:38.20px;text-align:right;top:247.78px;height:19px;line-height:19px;font:12.845px/19px 'Liberation Mono',monospace;color:#237893">14</div><div style="position:absolute;left:0;width:38.20px;text-align:right;top:266.78px;height:19px;line-height:19px;font:12.845px/19px 'Liberation Mono',monospace;color:#237893">15</div><div style="position:absolute;left:64px;top:266.78px;height:19px;white-space:pre;font:12.845px/19px 'Liberation Mono',monospace"><span style="color:#a31515">- Summary: a short concise summary of the session. Summarize c</span></div><div style="position:absolute;left:0;width:38.20px;text-align:right;top:285.78px;height:19px;line-height:19px;font:12.845px/19px 'Liberation Mono',monospace;color:#237893">16</div><div style="position:absolute;left:64px;top:285.78px;height:19px;white-space:pre;font:12.845px/19px 'Liberation Mono',monospace"><span style="color:#a31515">- What the user did: a bullet point list summarizing what the user</span></div><div style="position:absolute;left:0;width:38.20px;text-align:right;top:304.78px;height:19px;line-height:19px;font:12.845px/19px 'Liberation Mono',monospace;color:#237893">17</div><div style="position:absolute;left:64px;top:304.78px;height:19px;white-space:pre;font:12.845px/19px 'Liberation Mono',monospace"><span style="color:#a31515">- Frictions: a bullet point list describing any frictions the user</span></div><div style="position:absolute;left:0;width:38.20px;text-align:right;top:323.78px;height:19px;line-height:19px;font:12.845px/19px 'Liberation Mono',monospace;color:#237893">18</div><div style="position:absolute;left:0;width:38.20px;text-align:right;top:342.78px;height:19px;line-height:19px;font:12.845px/19px 'Liberation Mono',monospace;color:#237893">19</div><div style="position:absolute;left:64px;top:342.78px;height:19px;white-space:pre;font:12.845px/19px 'Liberation Mono',monospace"><span style="color:#a31515">Use concise language and focus on user actions, evidence, and facts</span></div><div style="position:absolute;left:0;width:38.20px;text-align:right;top:361.78px;height:19px;line-height:19px;font:12.845px/19px 'Liberation Mono',monospace;color:#237893">20</div><div style="position:absolute;left:64px;top:361.78px;height:19px;white-space:pre;font:12.845px/19px 'Liberation Mono',monospace"><span style="color:#a31515">For each point, if there are examples available, you should include</span></div><div style="position:absolute;left:0;width:38.20px;text-align:right;top:380.78px;height:19px;line-height:19px;font:12.845px/19px 'Liberation Mono',monospace;color:#237893">21</div><div style="position:absolute;left:0;width:38.20px;text-align:right;top:399.78px;height:19px;line-height:19px;font:12.845px/19px 'Liberation Mono',monospace;color:#237893">22</div><div style="position:absolute;left:64px;top:399.78px;height:19px;white-space:pre;font:12.845px/19px 'Liberation Mono',monospace"><span style="color:#a31515">Output format: A JSON array of AiAnalysisSection objects where each</span></div><div style="position:absolute;left:0;width:38.20px;text-align:right;top:418.78px;height:19px;line-height:19px;font:12.845px/19px 'Liberation Mono',monospace;color:#237893">23</div><div style="position:absolute;left:0;width:38.20px;text-align:right;top:437.78px;height:19px;line-height:19px;font:12.845px/19px 'Liberation Mono',monospace;color:#237893">24</div><div style="position:absolute;left:64px;top:437.78px;height:19px;white-space:pre;font:12.845px/19px 'Liberation Mono',monospace"><span style="color:#a31515">type AiAnalysisSection = {</span></div><div style="position:absolute;left:0;width:38.20px;text-align:right;top:456.78px;height:19px;line-height:19px;font:12.845px/19px 'Liberation Mono',monospace;color:#237893">25</div><div style="position:absolute;left:64px;top:456.78px;height:19px;white-space:pre;font:12.845px/19px 'Liberation Mono',monospace"><span style="color:#a31515">    label: string;</span></div><div style="position:absolute;left:0;width:38.20px;text-align:right;top:475.78px;height:19px;line-height:19px;font:12.845px/19px 'Liberation Mono',monospace;color:#237893">26</div><div style="position:absolute;left:64px;top:475.78px;height:19px;white-space:pre;font:12.845px/19px 'Liberation Mono',monospace"><span style="color:#a31515">    items: AiAnalysisItem[];</span></div><div style="position:absolute;left:0;width:38.20px;text-align:right;top:494.78px;height:19px;line-height:19px;font:12.845px/19px 'Liberation Mono',monospace;color:#237893">27</div><div style="position:absolute;left:64px;top:494.78px;height:19px;white-space:pre;font:12.845px/19px 'Liberation Mono',monospace"><span style="color:#a31515">};</span></div><div style="position:absolute;left:0;width:38.20px;text-align:right;top:513.78px;height:19px;line-height:19px;font:12.845px/19px 'Liberation Mono',monospace;color:#237893">28</div><div style="position:absolute;left:0;width:38.20px;text-align:right;top:532.78px;height:19px;line-height:19px;font:12.845px/19px 'Liberation Mono',monospace;color:#237893">29</div><div style="position:absolute;left:64px;top:532.78px;height:19px;white-space:pre;font:12.845px/19px 'Liberation Mono',monospace"><span style="color:#a31515">type AiAnalysisItem = {</span></div><div style="position:absolute;left:0;width:38.20px;text-align:right;top:551.78px;height:19px;line-height:19px;font:12.845px/19px 'Liberation Mono',monospace;color:#237893">30</div><div style="position:absolute;left:64px;top:551.78px;height:19px;white-space:pre;font:12.845px/19px 'Liberation Mono',monospace"><span style="color:#a31515">    text: string;</span></div><div style="position:absolute;left:0;width:38.20px;text-align:right;top:570.78px;height:19px;line-height:19px;font:12.845px/19px 'Liberation Mono',monospace;color:#237893">31</div><div style="position:absolute;left:64px;top:570.78px;height:19px;white-space:pre;font:12.845px/19px 'Liberation Mono',monospace"><span style="color:#a31515">    timestamps?: number[];</span></div><div style="position:absolute;left:0;width:38.20px;text-align:right;top:589.78px;height:19px;line-height:19px;font:12.845px/19px 'Liberation Mono',monospace;color:#237893">32</div><div style="position:absolute;left:64px;top:589.78px;height:19px;white-space:pre;font:12.845px/19px 'Liberation Mono',monospace"><span style="color:#a31515">};</span></div><div style="position:absolute;left:0;width:38.20px;text-align:right;top:608.78px;height:19px;line-height:19px;font:12.845px/19px 'Liberation Mono',monospace;color:#237893">33</div><div style="position:absolute;left:0;width:38.20px;text-align:right;top:627.78px;height:19px;line-height:19px;font:12.845px/19px 'Liberation Mono',monospace;color:#237893">34</div><div style="position:absolute;left:64px;top:627.78px;height:19px;white-space:pre;font:12.845px/19px 'Liberation Mono',monospace"><span style="color:#a31515">Important Reminder:</span></div><div style="position:absolute;left:0;width:38.20px;text-align:right;top:646.78px;height:19px;line-height:19px;font:12.845px/19px 'Liberation Mono',monospace;color:#237893">35</div><div style="position:absolute;left:64px;top:646.78px;height:19px;white-space:pre;font:12.845px/19px 'Liberation Mono',monospace"><span style="color:#a31515">Summarize user sessions by first reasoning through all actions and</span></div><div style="position:absolute;left:0;width:38.20px;text-align:right;top:665.78px;height:19px;line-height:19px;font:12.845px/19px 'Liberation Mono',monospace;color:#237893">36</div><div style="position:absolute;left:64px;top:665.78px;height:19px;white-space:pre;font:12.845px/19px 'Liberation Mono',monospace"><span style="color:#a31515">`</span><span style="color:#0431fa">)</span><span style="color:#000000">;</span></div><div style="position:absolute;left:0;width:38.20px;text-align:right;top:684.78px;height:19px;line-height:19px;font:12.845px/19px 'Liberation Mono',monospace;color:#237893">37</div><div style="position:absolute;left:0;width:38.20px;text-align:right;top:703.78px;height:19px;line-height:19px;font:12.845px/19px 'Liberation Mono',monospace;color:#237893">38</div><div style="position:absolute;left:64px;top:703.78px;height:19px;white-space:pre;font:12.845px/19px 'Liberation Mono',monospace"><span style="color:#0000ff">var</span><span style="color:#000000"> correlationIdConstraint = </span><span style="color:#a31515">`correlationId == &#x27;</span><span style="color:#000000">$</span><span style="color:#0431fa">{</span><span style="color:#000000">session.correlationId</span></div><div style="position:absolute;left:0;width:38.20px;text-align:right;top:722.78px;height:19px;line-height:19px;font:12.845px/19px 'Liberation Mono',monospace;color:#237893">39</div><div style="position:absolute;left:0;width:38.20px;text-align:right;top:741.78px;height:19px;line-height:19px;font:12.845px/19px 'Liberation Mono',monospace;color:#237893">40</div><div style="position:absolute;left:64px;top:741.78px;height:19px;white-space:pre;font:12.845px/19px 'Liberation Mono',monospace"><span style="color:#0000ff">var</span><span style="color:#000000"> storyBeatQuery = </span><span style="color:#0000ff">new</span><span style="color:#000000"> </span><span style="color:#267f99">HighLevelQuery</span><span style="color:#0431fa">()</span><span style="color:#000000">;</span></div><div style="position:absolute;left:0;width:38.20px;text-align:right;top:760.78px;height:19px;line-height:19px;font:12.845px/19px 'Liberation Mono',monospace;color:#237893">41</div><div style="position:absolute;left:64px;top:760.78px;height:19px;white-space:pre;font:12.845px/19px 'Liberation Mono',monospace"><span style="color:#000000">storyBeatQuery.kpi = </span><span style="color:#a31515">&#x27;Story Beat&#x27;</span><span style="color:#000000">;</span></div><div style="position:absolute;left:0;width:38.20px;text-align:right;top:779.78px;height:19px;line-height:19px;font:12.845px/19px 'Liberation Mono',monospace;color:#237893">42</div><div style="position:absolute;left:64px;top:779.78px;height:19px;white-space:pre;font:12.845px/19px 'Liberation Mono',monospace"><span style="color:#000000">storyBeatQuery.measures.add</span><span style="color:#0431fa">(</span><span style="color:#a31515">&#x27;name&#x27;</span><span style="color:#0431fa">)</span><span style="color:#000000">;</span></div><div style="position:absolute;left:0;width:38.20px;text-align:right;top:798.78px;height:19px;line-height:19px;font:12.845px/19px 'Liberation Mono',monospace;color:#237893">43</div><div style="position:absolute;left:64px;top:798.78px;height:19px;white-space:pre;font:12.845px/19px 'Liberation Mono',monospace"><span style="color:#000000">storyBeatQuery.measures.add</span><span style="color:#0431fa">(</span><span style="color:#a31515">&#x27;actionCategory&#x27;</span><span style="color:#0431fa">)</span><span style="color:#000000">;</span></div><div style="position:absolute;left:0;width:38.20px;text-align:right;top:817.78px;height:19px;line-height:19px;font:12.845px/19px 'Liberation Mono',monospace;color:#237893">44</div><div style="position:absolute;left:64px;top:817.78px;height:19px;white-space:pre;font:12.845px/19px 'Liberation Mono',monospace"><span style="color:#000000">storyBeatQuery.measures.add</span><span style="color:#0431fa">(</span><span style="color:#a31515">&#x27;duration&#x27;</span><span style="color:#0431fa">)</span><span style="color:#000000">;</span></div><div style="position:absolute;left:525px;top:0;width:1px;height:840px;background:#efefef"></div><div style="position:absolute;left:526px;top:0;width:14px;height:3px;background:#4a4a4a"></div><div style="position:absolute;left:497px;top:9px;width:26px;height:28px;background:#fffffe"></div><svg style="position:absolute;left:502px;top:14px" width="16" height="16" viewBox="0 0 16 16"><path d="M1 5 V1 H5 M11 1 H15 V5 M15 11 V15 H11 M5 15 H1 V11" stroke="#707070" stroke-width="2" fill="none"/></svg>
</div>
<div style="position:absolute;left:1091px;top:648px;width:40px;height:40px;border-radius:50%;background:#eeeeee;box-shadow:0 2px 8px rgba(0,0,0,0.35)"></div>
<svg style="position:absolute;left:1105px;top:661px;" width="10" height="14" viewBox="0 0 10 14"><path d="M8 1 L2 7 L8 13" stroke="#333" stroke-width="2" fill="none"/></svg>
</body></html>
